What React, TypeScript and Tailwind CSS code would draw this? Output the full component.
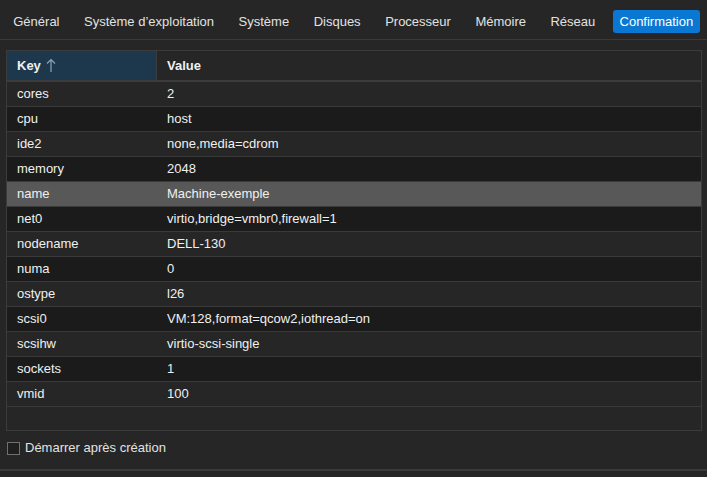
import React from 'react';

// ==================== Données ====================

const TABS = ['Général', "Système d’exploitation", 'Système', 'Disques', 'Processeur', 'Mémoire', 'Réseau'];

const ROWS: { key: string; value: string }[] = [
  { key: 'cores', value: '2' },
  { key: 'cpu', value: 'host' },
  { key: 'ide2', value: 'none,media=cdrom' },
  { key: 'memory', value: '2048' },
  { key: 'name', value: 'Machine-exemple' },
  { key: 'net0', value: 'virtio,bridge=vmbr0,firewall=1' },
  { key: 'nodename', value: 'DELL-130' },
  { key: 'numa', value: '0' },
  { key: 'ostype', value: 'l26' },
  { key: 'scsi0', value: 'VM:128,format=qcow2,iothread=on' },
  { key: 'scsihw', value: 'virtio-scsi-single' },
  { key: 'sockets', value: '1' },
  { key: 'vmid', value: '100' },
];

const SELECTED = 'name';

// ==================== Composant ====================

export default function App() {
  return (
    <div
      className="w-[707px] h-[477px] bg-[#262626] text-[13px] text-[#f0f0f0] flex flex-col overflow-hidden"
      style={{ fontFamily: '"Liberation Sans", Arial, sans-serif' }}
    >
      {/* Onglets */}
      <div className="h-[40px] shrink-0 flex items-center pl-px pt-[4px] border-b border-[#3a3a3a]">
        {TABS.map((t) => (
          <div key={t} className="px-[12.25px] text-[#e2e2e2] leading-none">
            {t}
          </div>
        ))}
        <div className="ml-[5px] px-[7px] h-[23px] flex items-center rounded-[3px] bg-[#0a78d2] text-white leading-none">
          Confirmation
        </div>
      </div>

      {/* Tableau */}
      <div className="mt-[10px] ml-[6px] mr-[5px] h-[381px] shrink-0 border border-[#3c3c3c] flex flex-col">
        <div className="h-[31px] shrink-0 flex border-b-2 border-[#3c3c3c] font-bold">
          <div className="w-[150px] shrink-0 bg-[#1d384d] border-r border-[#3c3c3c] flex items-center pl-[10px] gap-[5px]">
            <span>Key</span>
            <svg width="10" height="15" viewBox="0 0 10 15" fill="none" stroke="#8ea3b3" strokeWidth="1.2">
              <path d="M5 14V1.5M1 5.5l4-4 4 4" />
            </svg>
          </div>
          <div className="flex-1 flex items-center pl-[10px]">Value</div>
        </div>
        {ROWS.map((r, i) => (
          <div
            key={r.key}
            className={
              'h-[25px] shrink-0 flex items-center border-b border-[#3a3a3a] ' +
              (r.key === SELECTED ? 'bg-[#585858]' : i % 2 === 1 ? 'bg-[#1b1b1b]' : 'bg-[#262626]')
            }
          >
            <div className="w-[150px] shrink-0 pl-[10px]">{r.key}</div>
            <div className="flex-1 pl-[10px]">{r.value}</div>
          </div>
        ))}
        <div className="flex-1" />
      </div>

      {/* Case à cocher */}
      <div className="h-[38px] shrink-0 flex items-center pl-[7px] pb-[4px] gap-[5px]">
        <span className="w-[13px] h-[13px] border border-[#707070] bg-[#1f1f1f]" />
        <span className="text-[#e2e2e2]">Démarrer après création</span>
      </div>
      <div className="border-t-2 border-[#3a3a3a]" />
    </div>
  );
}
